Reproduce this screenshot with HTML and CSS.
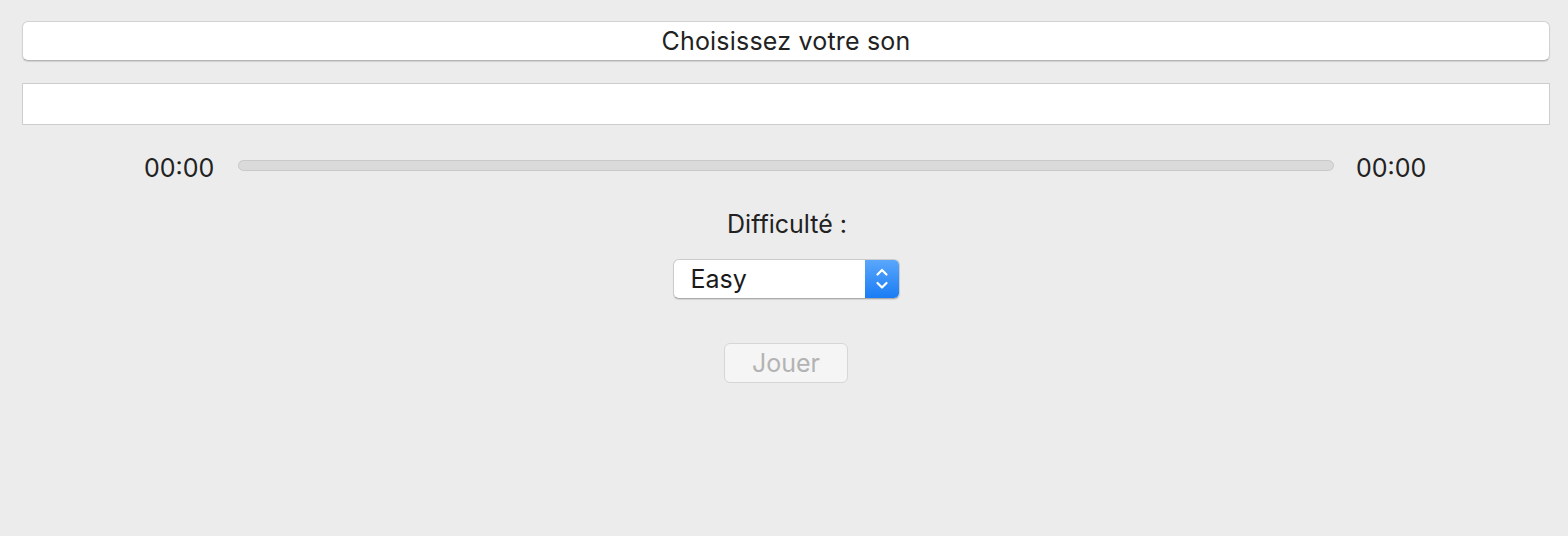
FILE: index.html
```html
<!DOCTYPE html>
<html lang="fr">
<head>
<meta charset="utf-8">
<title>Choisissez votre son</title>
<link rel="stylesheet" href="styles.css">
</head>
<body>
<main class="window">
  <button class="choose-btn" type="button">Choisissez votre son</button>
  <div class="path-field"></div>
  <div class="player">
    <span class="time">00:00</span>
    <div class="track"></div>
    <span class="time">00:00</span>
  </div>
  <div class="label">Difficulté :</div>
  <div class="select">
    <span class="select-value">Easy</span>
    <span class="select-arrows">
      <svg width="18" height="28" viewBox="0 0 18 28" fill="none" stroke="#fff" stroke-width="2.2" stroke-linecap="round" stroke-linejoin="round">
        <path d="M4.5 9.5 L9 5 L13.5 9.5"/>
        <path d="M4.5 18 L9 22.5 L13.5 18"/>
      </svg>
    </span>
  </div>
  <button class="play-btn" type="button" disabled>Jouer</button>
</main>
</body>
</html>
```

FILE: styles.css
```css
html, body {
  margin: 0;
  padding: 0;
  background: #ececec;
}

body {
  font-family: "Inter", "Liberation Sans", sans-serif;
  color: #222;
}

.window {
  width: 1568px;
  height: 536px;
  box-sizing: border-box;
  padding: 21px 18px 0 22px;
  display: flex;
  flex-direction: column;
  align-items: center;
}

.choose-btn {
  align-self: stretch;
  height: 40px;
  box-sizing: border-box;
  background: #fff;
  border: 1px solid #d2d2d2;
  border-bottom-color: #b4b4b4;
  border-radius: 6px;
  box-shadow: 0 1px 1px rgba(0, 0, 0, 0.12);
  font-family: inherit;
  font-size: 25px;
  letter-spacing: 0.2px;
  color: #222;
  padding: 0;
  margin: 0;
}

.path-field {
  align-self: stretch;
  height: 42px;
  box-sizing: border-box;
  margin-top: 22px;
  background: #fff;
  border: 1px solid #cdcdcd;
}

.player {
  align-self: stretch;
  display: flex;
  align-items: center;
  margin-top: 23px;
  padding: 0 122px 0 122px;
  height: 40px;
}

.time {
  font-size: 25px;
  color: #222;
  width: 72px;
}

.player .time:first-child {
  margin-right: 22px;
}

.player .time:last-child {
  margin-left: 22px;
}

.track {
  flex: 1;
  height: 11px;
  box-sizing: border-box;
  background: #dadada;
  border: 1px solid #c9c9c9;
  border-radius: 6px;
  margin-top: -6px;
}

.label {
  margin-top: 21px;
  font-size: 25px;
  color: #222;
  height: 30px;
  line-height: 30px;
  padding-left: 2px;
}

.select {
  margin-top: 20px;
  width: 227px;
  height: 40px;
  box-sizing: border-box;
  display: flex;
  background: #fff;
  border: 1px solid #cbcbcb;
  border-bottom-color: #ababab;
  border-radius: 6px;
  box-shadow: 0 1px 1px rgba(0, 0, 0, 0.1);
  overflow: hidden;
}

.select-value {
  flex: 1;
  font-size: 25px;
  line-height: 38px;
  padding-left: 17px;
  color: #1a1a1a;
}

.select-arrows {
  width: 34px;
  display: flex;
  align-items: center;
  justify-content: center;
  background: linear-gradient(#5aa7fb, #1a7cf5);
}

.play-btn {
  margin-top: 44px;
  width: 124px;
  height: 40px;
  box-sizing: border-box;
  background: #f5f5f5;
  border: 1px solid #d6d6d6;
  border-radius: 6px;
  font-family: inherit;
  font-size: 25px;
  color: #b3b3b3;
  padding: 0;
}
```
